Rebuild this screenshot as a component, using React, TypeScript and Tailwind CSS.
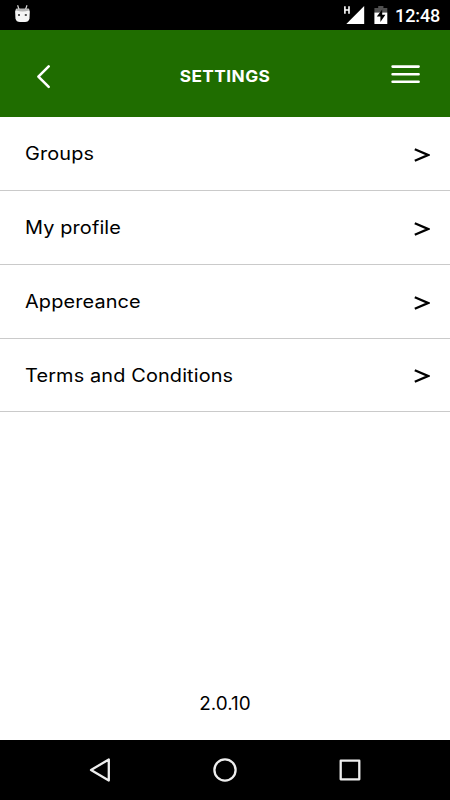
const rows = ["Groups", "My profile", "Appereance", "Terms and Conditions"];

function StatusBar() {
  return (
    <div className="flex h-[30px] shrink-0 items-center bg-black">
      <svg width="60" height="30" viewBox="0 0 60 30">
        <path d="M17.6 5.2l1.4 4M27 5.2l-1.4 4" stroke="#d8d8d8" strokeWidth="1.2" />
        <path d="M16 8.7h13l.8 3-.3 6.8q-.8 3.5-4.5 3.5h-5q-3.8 0-4.5-3.5l-.4-6.8z" fill="#f5f5f5" />
        <path d="M16.6 8.7h11.9l.6 1.8q-6.6 2-13 0z" fill="#b5b5b5" />
        <rect x="18" y="14" width="2" height="2" fill="#555" />
        <rect x="24.8" y="14" width="2" height="2" fill="#555" />
      </svg>
      <div className="flex-1" />
      <svg width="60" height="30" viewBox="0 0 60 30">
        <path d="M9.9 6.3v7.4M14 6.3v7.4M9.9 10H14" stroke="#fff" strokeWidth="1.6" fill="none" />
        <path d="M29.2 6v18H11.3z" fill="#fff" />
        <path d="M39.4 12.5V8h3.8V6h5.2v2h3.9v4.5z" fill="#505050" />
        <path d="M39.4 12.5h12.9V24H39.4z" fill="#fff" />
        <path d="M47.2 9.5l-5.4 7h3.6v5.4l5-7.1h-3.2z" fill="#000" />
      </svg>
      <span className="w-[55px] pt-px font-[Roboto,sans-serif] text-[18px] leading-[30px] font-medium tracking-[-0.1px] text-white">12:48</span>
    </div>
  );
}

function Header() {
  return (
    <header className="flex h-[87px] shrink-0 items-center justify-between bg-[#1f6d00] pr-[30px] pl-[36px]">
      <svg width="30" height="30" viewBox="0 0 30 30" fill="none" stroke="#fff" strokeWidth="2.6" strokeLinecap="round" strokeLinejoin="round">
        <path d="M12.7 7.4L2.4 17.6l10.3 10.2" />
      </svg>
      <h1 className="-ml-[7px] scale-x-[1.08] pt-[4px] text-[16px] leading-6 font-bold tracking-[0.4px] whitespace-nowrap text-white">SETTINGS</h1>
      <svg width="30" height="30" viewBox="0 0 30 30" stroke="#fff" strokeWidth="2.6" strokeLinecap="round">
        <path d="M2.6 7.6h26M2.6 15.2h26M2.6 22.8h26" />
      </svg>
    </header>
  );
}

export default function App() {
  return (
    <div className="flex h-[800px] w-[450px] flex-col overflow-hidden bg-white font-[Inter,sans-serif] text-black">
      <StatusBar />
      <Header />
      <main className="flex flex-1 flex-col">
        {rows.map((label) => (
          <div key={label} className="flex h-[73.85px] items-center justify-between border-b border-[#cacaca] pr-[20px] pl-[24.5px]">
            <span className="origin-left scale-x-[1.105] pt-[2px] text-[18px] leading-6 tracking-[0.12px]">{label}</span>
            <svg className="mt-[3px]" width="16" height="18" viewBox="0 0 16 18" fill="none" stroke="#000" strokeWidth="2.3">
              <path d="M0.8 3.2L14 9 0.8 14.8" />
            </svg>
          </div>
        ))}
        <p className="mt-auto scale-x-[1.05] pb-[24px] text-center text-[18px] leading-6">2.0.10</p>
      </main>
      <nav className="h-[60px] shrink-0 bg-black">
        <svg width="450" height="60" viewBox="0 0 450 60" fill="none" stroke="#eee" strokeWidth="2.3" strokeLinejoin="round">
          <path d="M108.8 19.5v21L91 30z" />
          <circle cx="225" cy="30" r="10.6" />
          <rect x="340.7" y="20.7" width="18.6" height="18.6" />
        </svg>
      </nav>
    </div>
  );
}
